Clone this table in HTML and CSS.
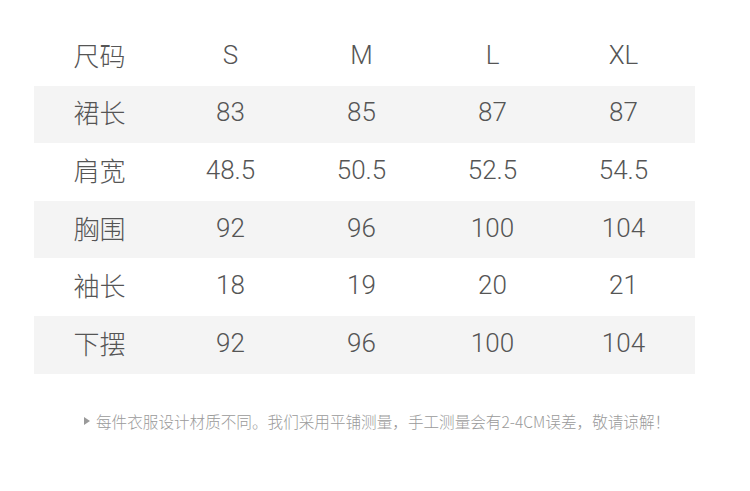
FILE: index.html
```html
<!DOCTYPE html>
<html lang="zh-CN">
<head>
<meta charset="utf-8">
<link rel="stylesheet" href="styles.css">
</head>
<body>
<div class="page">
  <div class="table">
    <div class="row"><div class="cell label">尺码</div><div class="cell">S</div><div class="cell">M</div><div class="cell">L</div><div class="cell">XL</div></div>
    <div class="row alt"><div class="cell label">裙长</div><div class="cell">83</div><div class="cell">85</div><div class="cell">87</div><div class="cell">87</div></div>
    <div class="row"><div class="cell label">肩宽</div><div class="cell">48.5</div><div class="cell">50.5</div><div class="cell">52.5</div><div class="cell">54.5</div></div>
    <div class="row alt"><div class="cell label">胸围</div><div class="cell">92</div><div class="cell">96</div><div class="cell">100</div><div class="cell">104</div></div>
    <div class="row"><div class="cell label">袖长</div><div class="cell">18</div><div class="cell">19</div><div class="cell">20</div><div class="cell">21</div></div>
    <div class="row alt"><div class="cell label">下摆</div><div class="cell">92</div><div class="cell">96</div><div class="cell">100</div><div class="cell">104</div></div>
  </div>
  <p class="note"><span class="arrow"></span>每件衣服设计材质不同。我们采用平铺测量，手工测量会有2-4CM误差，敬请谅解！</p>
</div>
</body>
</html>
```
FILE: styles.css
```css
html, body {
  margin: 0;
  padding: 0;
  background: #ffffff;
}
.page {
  width: 750px;
  height: 491px;
  padding: 28px 0 0 34px;
  box-sizing: border-box;
  font-family: Roboto, "Noto Sans CJK SC", sans-serif;
}
.table {
  width: 661px;
  display: flex;
  flex-direction: column;
}
.row {
  display: grid;
  grid-template-columns: repeat(5, 131px);
  height: 57.6px;
  align-items: center;
}
.row.alt {
  background: #f4f4f4;
}
.cell {
  text-align: center;
  font-size: 26px;
  font-weight: 300;
  color: #555555;
  line-height: 1;
  padding-bottom: 4px;
}
.label {
  font-family: "Noto Sans CJK SC", sans-serif;
  font-weight: 300;
}
.note {
  margin: 40px 0 0 50px;
  display: flex;
  align-items: center;
  font-family: "Noto Sans CJK SC", sans-serif;
  font-weight: 300;
  font-size: 15.6px;
  color: #9a9a9a;
  line-height: 1;
  white-space: nowrap;
}
.arrow {
  width: 0;
  height: 0;
  border-top: 4px solid transparent;
  border-bottom: 4px solid transparent;
  border-left: 6px solid #9a9a9a;
  margin-right: 6px;
}
```
